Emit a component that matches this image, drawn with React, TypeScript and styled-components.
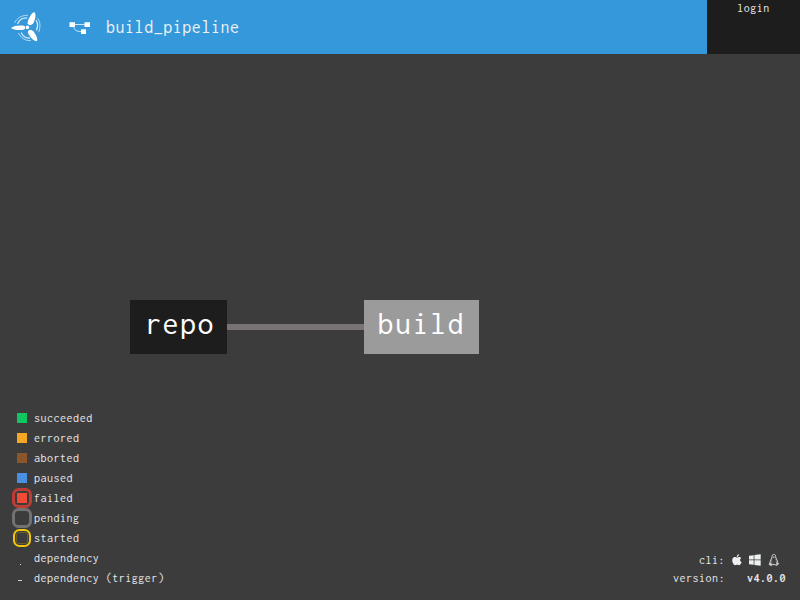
import React from "react";
import styled, { createGlobalStyle } from "styled-components";

const GlobalStyle = createGlobalStyle`
  * { box-sizing: border-box; }
  body { margin: 0; background: #3d3c3c; }
`;

const Page = styled.div`
  width: 800px;
  height: 600px;
  display: flex;
  flex-direction: column;
  overflow: hidden;
  background: #3d3c3c;
  color: #e6e7e8;
  font-family: Inconsolata, "Liberation Mono", monospace;
  font-size: 12px;
  font-weight: 370;
  letter-spacing: 0.52px;
`;

const TopBar = styled.header`
  height: 54px;
  flex: none;
  display: flex;
  background: #3498db;
`;

const HomeLink = styled.div`
  width: 54px;
  height: 54px;
  flex: none;
`;

const Breadcrumb = styled.div`
  flex: 1;
  display: flex;
  align-items: center;
  padding-left: 15px;
  gap: 15px;
  color: #ecf0f1;
`;

const PipelineName = styled.span`
  font-size: 18px;
  line-height: 20px;
  letter-spacing: 0.54px;
`;

const Login = styled.div`
  width: 93px;
  background: #1e1d1d;
  text-align: center;
  line-height: 16px;
`;

const Graph = styled.main`
  height: 346px;
  flex: none;
  display: flex;
  align-items: flex-start;
  padding: 246px 0 0 130px;
`;

const Node = styled.div<{ $width: number; $fill: string; $inset: number }>`
  width: ${(p) => p.$width}px;
  height: 54px;
  padding-left: ${(p) => p.$inset}px;
  background: ${(p) => p.$fill};
  color: #fff;
  font-size: 32px;
  font-weight: 400;
  line-height: 47px;
  letter-spacing: 1.5px;
  white-space: nowrap;
`;

const Edge = styled.div`
  width: 137px;
  height: 6px;
  margin-top: 24px;
  background: #7a7373;
`;

const Footer = styled.footer`
  flex: 1;
  display: flex;
  justify-content: space-between;
  padding: 8px 14px 0 12px;
`;

const Legend = styled.dl`
  margin: 0;
  display: grid;
  grid-template-columns: 22px auto;
  grid-auto-rows: 20px;
  align-items: start;
  line-height: 20px;
`;

const Term = styled.dt`
  width: 20px;
  height: 20px;
  display: grid;
  place-items: center;
`;

const Meaning = styled.dd`
  margin: 0;
`;

const Swatch = styled.div<{ $color: string }>`
  width: 10px;
  height: 10px;
  background: ${(p) => p.$color};
`;

const Ring = styled.div<{ $color: string; $size: number; $thickness: number }>`
  width: ${(p) => p.$size}px;
  height: ${(p) => p.$size}px;
  display: grid;
  place-items: center;
  border: ${(p) => p.$thickness}px solid ${(p) => p.$color};
  border-radius: 6.5px;
`;

const InnerRing = styled.div`
  width: 12px;
  height: 12px;
  border: 1px solid #6c5f28;
  border-radius: 3px;
`;

const Dash = styled.div<{ $width: number; $top: number }>`
  width: ${(p) => p.$width}px;
  height: 1px;
  margin: ${(p) => p.$top}px 4px 0 0;
  align-self: start;
  background: #d3d3d3;
`;

const Info = styled.div`
  display: grid;
  grid-template-columns: 52px 61px;
  grid-template-rows: 18px 18px;
  align-content: start;
  line-height: 18px;
  padding-top: 143px;
`;

const Label = styled.span`
  text-align: right;
`;

const Version = styled.span`
  text-align: right;
  font-weight: 700;
  color: #e6e7e8;
`;

const CliLinks = styled.div`
  display: flex;
  padding: 3px 0 0 7.4px;
  gap: 6.6px;
`;

const Logo = () => (
  <svg width="54" height="54" viewBox="0 0 54 54" fill="#fff">
    <circle cx="27.4" cy="27.4" r="1.8" />
    <path d="M11 28C13 26.3 16 25.5 22.6 25.5L24.6 26.1Q25.7 27.6 24.6 29.2L22.4 30C16.5 30.2 13 29.7 11 28Z" />
    <path d="M34.3 12C36.2 14.5 35.9 18 33 23.7L30.6 25.2Q28.4 25 27.5 23.5L27.9 21C30 15.5 32 13 34.3 12Z" />
    <path d="M27.8 31.8Q28.6 29.7 30.7 29.7L33.2 31.1C36.3 35.5 38 38.8 37 41.3C34 41 31 38.7 28.3 33.7Z" />
    <g fill="none" stroke="#fff" strokeLinecap="round" opacity=".8">
      <path strokeWidth=".8" d="M14.8 22.5C17 18 21.5 15.2 27.5 15.3" />
      <path strokeWidth="1.3" d="M17.8 23.5C19.2 20 22 17.8 26.8 17.9" />
      <path strokeWidth=".8" d="M37.8 18.4C40.5 22 40.6 27 38.8 31.8" />
      <path strokeWidth="1.3" d="M36.2 20.5C38 23.6 38 27 36.5 30" />
      <path strokeWidth=".8" d="M30.5 40.6C25 41 21 37.8 18.6 33.3" />
      <path strokeWidth="1.3" d="M29.5 38.2C25.8 38.2 23 36 21.3 33" />
    </g>
  </svg>
);

const PipelineIcon = () => (
  <svg width="22" height="14" viewBox="0 0 22 14">
    <path d="M4 4.5H17M4.5 6C5 10 7.5 11.5 12 11.5" fill="none" stroke="#fff" strokeWidth="1" opacity=".75" />
    <path fill="#fff" d="M.5 2.3H6V7H.5ZM15.5 2.3H21V7H15.5ZM12 9.3H17V14H12Z" />
  </svg>
);

const AppleIcon = () => (
  <svg width="10" height="12" viewBox="0 0 10 12" fill="#ecf0f1">
    <path d="M7 .3C7 1.7 6 2.9 4.8 2.9 4.7 1.5 5.8.4 7 .3Z" />
    <path d="M2.9 3C3.8 3 4.3 3.5 5 3.5S6.3 3 7.2 3C8 3 8.8 3.4 9.3 4.1 7.4 5.2 7.7 7.5 9.6 8.3 9 9.9 8 11.2 7 11.2 6.2 11.2 6 10.8 5.1 10.8 4.2 10.8 3.9 11.2 3.2 11.2 1.7 11.2.2 8.5.2 6.3.2 4.2 1.5 3 2.9 3Z" />
  </svg>
);

const WindowsIcon = () => (
  <svg width="12" height="12" viewBox="0 0 12 12" fill="#ecf0f1">
    <path d="M0 1.8L4.7 1.2V5.6H0ZM5.4 1.1L11.7.3V5.6H5.4ZM0 6.3H4.7V10.8L0 10.2ZM5.4 6.3H11.7V11.7L5.4 10.9Z" />
  </svg>
);

const LinuxIcon = () => (
  <svg width="12" height="12" viewBox="0 0 12 12">
    <path d="M4.1 2.4C4.1.9 4.9.4 5.8.4S7.6 1 7.6 2.5C7.6 4.5 9.4 5.5 9.5 8.3L10.5 10 8.3 11.5 7.2 10.6H4.5L3.3 11.5 1.2 10.5 2 8.3C2 6 4.1 4.6 4.1 2.4Z" fill="none" stroke="#d7dadb" strokeWidth="1" />
    <path d="M4.5 3.1L5.8 2.6 7.2 3.1 5.8 4.1ZM1.4 9.1L2.9 8.4 4.2 10.6 3.2 11.4 1 10.4ZM8 8.5L9.4 8.6 10.5 9.9 8.4 11.2Z" fill="#c9cccd" />
    <path d="M4.2 5C3.2 6.4 3.3 7.7 4.8 9.5M7.4 5C8.4 6 8.5 7.4 8.2 8.6" fill="none" stroke="#aaa" strokeWidth=".6" />
  </svg>
);

const statuses = [
  { name: "succeeded", color: "#11c560" },
  { name: "errored", color: "#f5a623" },
  { name: "aborted", color: "#8b572a" },
  { name: "paused", color: "#4a90e2" },
];

export default function App() {
  return (
    <>
      <GlobalStyle />
      <Page>
        <TopBar>
          <HomeLink><Logo /></HomeLink>
          <Breadcrumb>
            <PipelineIcon />
            <PipelineName>build_pipeline</PipelineName>
          </Breadcrumb>
          <Login>login</Login>
        </TopBar>
        <Graph>
          <Node $width={97} $fill="#1e1d1d" $inset={15}>repo</Node>
          <Edge />
          <Node $width={115} $fill="#9b9b9b" $inset={13.5}>build</Node>
        </Graph>
        <Footer>
          <Legend>
            {statuses.map((s) => (
              <React.Fragment key={s.name}>
                <Term><Swatch $color={s.color} /></Term>
                <Meaning>{s.name}</Meaning>
              </React.Fragment>
            ))}
            <Term>
              <Ring $color="#bd3d36" $size={20} $thickness={3}><Swatch $color="#f24b35" /></Ring>
            </Term>
            <Meaning>failed</Meaning>
            <Term><Ring $color="#747172" $size={20} $thickness={3} /></Term>
            <Meaning>pending</Meaning>
            <Term><Ring $color="#f1c40f" $size={18} $thickness={2}><InnerRing /></Ring></Term>
            <Meaning>started</Meaning>
            <Term><Dash $width={1} $top={16} /></Term>
            <Meaning>dependency</Meaning>
            <Term><Dash $width={4} $top={12} /></Term>
            <Meaning>dependency (trigger)</Meaning>
          </Legend>
          <Info>
            <Label>cli:</Label>
            <CliLinks>
              <AppleIcon />
              <WindowsIcon />
              <LinuxIcon />
            </CliLinks>
            <Label>version:</Label>
            <Version>v4.0.0</Version>
          </Info>
        </Footer>
      </Page>
    </>
  );
}
